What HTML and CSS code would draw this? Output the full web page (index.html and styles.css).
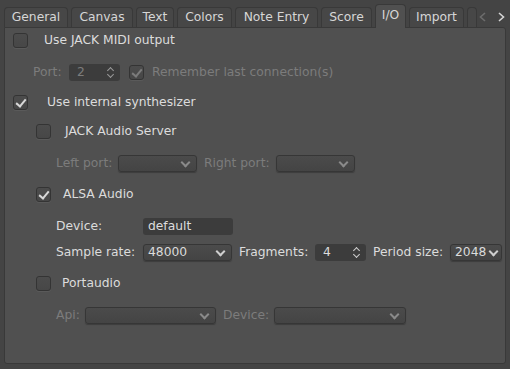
FILE: index.html
```html
<!DOCTYPE html>
<html lang="en">
<head>
    <meta charset="UTF-8">
    <title>Preferences - I/O</title>
    <link rel="stylesheet" href="styles.css">
</head>
<body>
    <div class="tabbar">
        <div class="tab t-general">General</div>
        <div class="tab t-canvas">Canvas</div>
        <div class="tab t-text">Text</div>
        <div class="tab t-colors">Colors</div>
        <div class="tab t-note">Note Entry</div>
        <div class="tab t-score">Score</div>
        <div class="tab active t-io">I/O</div>
        <div class="tab t-import">Import</div>
        <div class="tab stub"></div>
        <div class="scroller">
            <svg width="8" height="12" viewBox="0 0 8 12"><path d="M6 2 L1.5 6 L6 10" fill="none" stroke="#6c6c6c" stroke-width="1.6"/></svg>
            <svg width="8" height="12" viewBox="0 0 8 12"><path d="M2 2 L6.5 6 L2 10" fill="none" stroke="#d4d4d4" stroke-width="1.6"/></svg>
        </div>
    </div>

    <div class="panel">
        <div class="row r1">
            <span class="check"></span>
            <span class="label main">Use JACK MIDI output</span>
        </div>
        <div class="row r2 disabled">
            <span class="field-label port-label">Port:</span>
            <span class="spin w51"><span class="val">2</span><span class="updown"></span></span>
            <span class="check checked small-gap"></span>
            <span class="label">Remember last connection(s)</span>
        </div>
        <div class="row r3">
            <span class="check checked"></span>
            <span class="label synth">Use internal synthesizer</span>
        </div>
        <div class="row r4 indent">
            <span class="check"></span>
            <span class="label sub">JACK Audio Server</span>
        </div>
        <div class="row r5 disabled inset">
            <span class="field-label lp">Left port:</span>
            <span class="combo w79"></span>
            <span class="field-label rp">Right port:</span>
            <span class="combo w79"></span>
        </div>
        <div class="row r6 indent">
            <span class="check checked"></span>
            <span class="label alsa">ALSA Audio</span>
        </div>
        <div class="row r7 inset">
            <span class="field-label dev">Device:</span>
            <span class="text-input">default</span>
        </div>
        <div class="row r8 inset">
            <span class="field-label sr">Sample rate:</span>
            <span class="combo w89"><span class="val">48000</span></span>
            <span class="field-label frag">Fragments:</span>
            <span class="spin w51"><span class="val">4</span><span class="updown"></span></span>
            <span class="field-label period">Period size:</span>
            <span class="combo w52"><span class="val">2048</span></span>
        </div>
        <div class="row r9 indent">
            <span class="check"></span>
            <span class="label pa">Portaudio</span>
        </div>
        <div class="row r10 disabled inset">
            <span class="field-label api">Api:</span>
            <span class="combo w131"></span>
            <span class="field-label dev2">Device:</span>
            <span class="combo w132"></span>
        </div>
    </div>
</body>
</html>
```

FILE: styles.css
```css
body {
    margin: 0;
    width: 510px;
    height: 369px;
    overflow: hidden;
    background-color: #444444;
    font-family: "DejaVu Sans", sans-serif;
    font-size: 12.3px;
    color: #dcdcdc;
}

/* tabs */
.tabbar {
    display: flex;
    align-items: flex-end;
    height: 27px;
    padding-left: 4px;
}

.tab {
    height: 20px;
    line-height: 19px;
    margin-right: 3px;
    border: 1px solid #393939;
    border-bottom: none;
    border-radius: 4px 4px 0 0;
    background-color: #474747;
    color: #d6d6d6;
    box-sizing: border-box;
    text-align: center;
    white-space: nowrap;
}

.t-general { width: 64px; }
.t-canvas { width: 62px; }
.t-text { width: 38px; }
.t-colors { width: 55px; }
.t-note { width: 83px; }
.t-score { width: 51px; }
.t-io { width: 31px; }
.t-import { width: 55px; }

.tab.active {
    height: 24px;
    line-height: 20px;
    background-color: #505050;
    margin-bottom: -1px;
    position: relative;
    z-index: 2;
}

.tab.stub {
    width: 10px;
    margin-right: 0;
}

.scroller {
    display: flex;
    gap: 10px;
    align-items: center;
    height: 20px;
    margin-left: 2px;
}

/* panel */
.panel {
    margin-left: 4px;
    width: 502px;
    height: 337px;
    border: 1px solid #393939;
    border-radius: 0 3px 3px 3px;
    background-color: #505050;
    box-sizing: border-box;
    padding-top: 3px;
    position: relative;
}

.row {
    display: flex;
    align-items: center;
    height: 18px;
    padding-left: 8px;
    white-space: nowrap;
}

.r2 { margin-top: 14px; }
.r3 { margin-top: 12px; }
.r4 { margin-top: 11px; }
.r5 { margin-top: 14px; }
.r6 { margin-top: 13px; }
.r7 { margin-top: 14px; }
.r8 { margin-top: 8px; }
.r9 { margin-top: 13px; }
.r10 { margin-top: 14px; }

.indent { padding-left: 31px; }
.inset { padding-left: 51px; }

.disabled { color: #7c7c7c; }

/* checkboxes */
.check {
    width: 15px;
    height: 15px;
    box-sizing: border-box;
    border: 1px solid #343434;
    border-radius: 3px;
    background: linear-gradient(#4c4c4c, #474747);
    box-shadow: 0 1px 0 rgba(255, 255, 255, 0.06);
    position: relative;
    flex: none;
}

.check.checked::after {
    content: "";
    position: absolute;
    left: 4px;
    top: 1px;
    width: 4px;
    height: 8px;
    border-right: 2px solid #d8d8d8;
    border-bottom: 2px solid #d8d8d8;
    transform: rotate(40deg);
}

.disabled .check.checked::after {
    border-color: #7c7c7c;
}

.label { margin-left: 16px; }
.label.synth { margin-left: 19px; }
.label.sub { margin-left: 14px; }
.label.alsa { margin-left: 12px; }
.label.pa { margin-left: 11px; }

.small-gap { margin-left: 9px; }
.small-gap + .label { margin-left: 8px; }

.field-label { flex: none; }
.port-label { margin-left: 20px; width: 36px; }
.lp { width: 62px; }
.rp { margin-left: 7px; width: 72px; }
.dev { width: 87px; }
.sr { width: 87px; }
.frag { margin-left: 7px; width: 76px; }
.period { margin-left: 7px; width: 77px; }
.api { width: 29px; }
.dev2 { margin-left: 7px; width: 51px; }

/* inputs */
.spin, .text-input {
    height: 17px;
    box-sizing: border-box;
    border-radius: 3px;
    background-color: #3c3c3c;
    display: flex;
    align-items: center;
    position: relative;
    flex: none;
}

.spin .val, .text-input {
    padding-left: 8px;
    color: #dcdcdc;
}

.disabled .spin .val { color: #7c7c7c; }

.w51 { width: 51px; }

.updown {
    position: absolute;
    right: 5px;
    top: 3px;
    width: 9px;
    height: 11px;
}

.updown::before, .updown::after {
    content: "";
    position: absolute;
    left: 2px;
    width: 4px;
    height: 4px;
    border-left: 1.5px solid #cfcfcf;
    border-top: 1.5px solid #cfcfcf;
}

.updown::before { top: 1px; transform: rotate(45deg); }
.updown::after { bottom: 1px; transform: rotate(-135deg); }

.disabled .updown::before, .disabled .updown::after { border-color: #9a9a9a; }

.text-input {
    width: 90px;
    padding-left: 5px;
}

.combo {
    height: 17px;
    box-sizing: border-box;
    border: 1px solid #363636;
    border-radius: 3px;
    background: linear-gradient(#4b4b4b, #444444);
    box-shadow: 0 1px 1px rgba(0, 0, 0, 0.25);
    display: flex;
    align-items: center;
    position: relative;
    padding-left: 4px;
    flex: none;
}

.combo::after {
    content: "";
    position: absolute;
    right: 7px;
    top: 3px;
    width: 5px;
    height: 5px;
    border-right: 2px solid #cfcfcf;
    border-bottom: 2px solid #cfcfcf;
    transform: rotate(45deg);
}

.disabled .combo::after { border-color: #8a8a8a; }

.combo .val { color: #dcdcdc; }

.w79 { width: 79px; }
.w89 { width: 89px; }
.w52 { width: 52px; }
.w52::after { right: 4px; }
.w131 { width: 131px; }
.w132 { width: 132px; }
```
